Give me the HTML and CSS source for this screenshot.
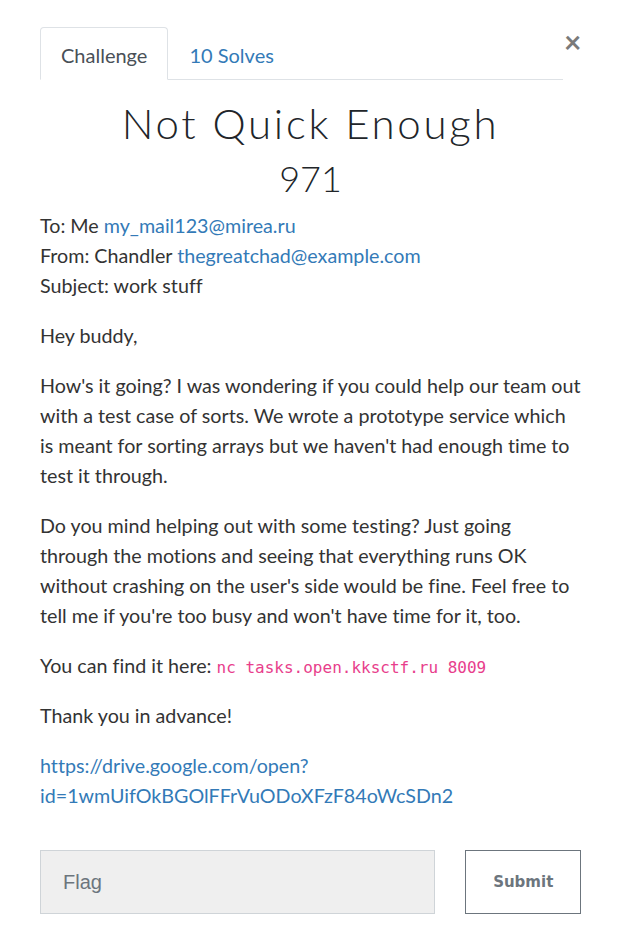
FILE: index.html
```html
<!DOCTYPE html>
<html>
<head>
<meta charset="utf-8">
<link rel="stylesheet" href="styles.css">
</head>
<body>
<div class="modal">
  <button class="close" aria-label="Close">&times;</button>
  <ul class="tabs">
    <li class="tab active">Challenge</li>
    <li class="tab"><a href="#">10 Solves</a></li>
  </ul>
  <h2 class="title">Not Quick Enough</h2>
  <h3 class="value">971</h3>
  <div class="desc">
    <p>To: Me <a href="#">my_mail123@mirea.ru</a><br>
    From: Chandler <a href="#">thegreatchad@example.com</a><br>
    Subject: work stuff</p>
    <p>Hey buddy,</p>
    <p>How's it going? I was wondering if you could help our team out with a test case of sorts. We wrote a prototype service which is meant for sorting arrays but we haven't had enough time to test it through.</p>
    <p>Do you mind helping out with some testing? Just going through the motions and seeing that everything runs OK without crashing on the user's side would be fine. Feel free to tell me if you're too busy and won't have time for it, too.</p>
    <p>You can find it here: <code>nc tasks.open.kksctf.ru 8009</code></p>
    <p>Thank you in advance!</p>
    <p><a href="#">https://drive.google.com/open?<br>id=1wmUifOkBGOlFFrVuODoXFzF84oWcSDn2</a></p>
  </div>
  <form class="submit-row">
    <input class="flag" type="text" placeholder="Flag">
    <button class="btn" type="button">Submit</button>
  </form>
</div>
</body>
</html>
```
FILE: styles.css
```css
* { box-sizing: border-box; }
body {
  margin: 0;
  background: #fff;
  font-family: Lato, "Open Sans", sans-serif;
  color: #212529;
}
.modal {
  position: relative;
  width: 622px;
  padding: 27px 41px 0 40px;
}
.close {
  position: absolute;
  top: 27px;
  left: 564px;
  border: 0;
  background: none;
  padding: 0;
  font-family: Lato, sans-serif;
  font-size: 30px;
  line-height: 28px;
  font-weight: 700;
  color: #7a7a7a;
  cursor: pointer;
}
.tabs {
  list-style: none;
  margin: 0 18px 0 0;
  padding: 0;
  display: flex;
  border-bottom: 1px solid #dee2e6;
}
.tab {
  font-size: 20px;
  line-height: 24px;
  padding: 15px 20px 12px 20px;
  margin-bottom: -1px;
  border: 1px solid transparent;
  border-radius: 4px 4px 0 0;
  color: #495057;
}
.tab.active {
  border-color: #dee2e6 #dee2e6 #fff;
  background: #fff;
}
.tab a { color: #337ab7; text-decoration: none; }
.title {
  margin: 18px 0 0;
  text-align: center;
  font-weight: 300;
  font-size: 42px;
  letter-spacing: 2.7px;
  line-height: 50px;
  color: #212529;
}
.value {
  margin: 8px 0 0;
  text-align: center;
  font-weight: 300;
  font-size: 36px;
  line-height: 44px;
  color: #212529;
}
.desc {
  margin: 11px -1px 0 0;
  font-size: 19.7px;
  line-height: 30px;
  color: #333;
  font-variant-ligatures: none;
}
.desc p { margin: 0 0 20px; }
.desc a { color: #337ab7; text-decoration: none; }
code {
  font-family: "DejaVu Sans Mono", "Liberation Mono", monospace;
  font-size: 16px;
  line-height: 16px;
  color: #e83e8c;
}
.submit-row {
  display: flex;
  gap: 30px;
  margin-top: 39px;
}
.flag {
  width: 397px;
  height: 64px;
  background: #efefef;
  border: 1px solid #cfd4d8;
  padding: 0 22px;
  font-family: "Liberation Sans", Arial, sans-serif;
  font-size: 20px;
  color: #495057;
}
.flag::placeholder { color: #6c757d; }
.btn {
  width: 116px;
  height: 64px;
  background: #fff;
  border: 1px solid #6c757d;
  font-family: "DejaVu Sans", sans-serif;
  font-weight: 700;
  font-size: 15px;
  color: #6c757d;
}
```
